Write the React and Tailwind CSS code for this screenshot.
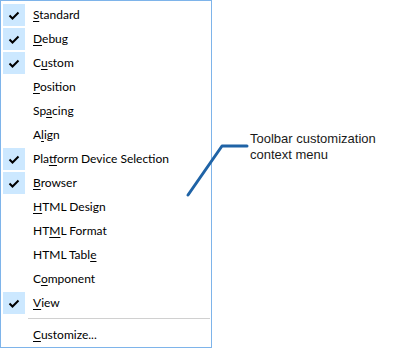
import React from 'react';

const items = [
  { pre: '', key: 'S', post: 'tandard', checked: true },
  { pre: '', key: 'D', post: 'ebug', checked: true },
  { pre: 'C', key: 'u', post: 'stom', checked: true },
  { pre: '', key: 'P', post: 'osition' },
  { pre: 'Sp', key: 'a', post: 'cing' },
  { pre: 'A', key: 'l', post: 'ign' },
  { pre: 'Pla', key: 't', post: 'form Device Selection', checked: true },
  { pre: '', key: 'B', post: 'rowser', checked: true },
  { pre: '', key: 'H', post: 'TML Design' },
  { pre: 'HT', key: 'M', post: 'L Format' },
  { pre: 'HTML Tabl', key: 'e', post: '' },
  { pre: 'C', key: 'o', post: 'mponent' },
  { pre: '', key: 'V', post: 'iew', checked: true },
];

const Check = () => (
  <svg width="22" height="22" viewBox="0 0 22 22">
    <path d="M6.5 11.5 L9.5 14.5 L15.5 8.5" fill="none" stroke="#000" strokeWidth="2" />
  </svg>
);

const MenuRow = ({ item }) => (
  <div className="flex items-center h-6 pl-[2px]">
    <div className={`w-[22px] h-[22px] flex items-center justify-center ${item.checked ? 'bg-[#cce8ff]' : ''}`}>
      {item.checked && <Check />}
    </div>
    <span className="ml-2 text-[12px] text-black whitespace-nowrap">
      {item.pre}
      <span className="underline underline-offset-2">{item.key}</span>
      {item.post}
    </span>
  </div>
);

export default function App() {
  return (
    <div className="relative w-[406px] h-[348px] bg-white flex" style={{ fontFamily: 'Lato, "Noto Sans", sans-serif' }}>
      {/* Context menu */}
      <div className="w-[212px] h-[348px] border border-[#7eb4ea] bg-white flex flex-col pt-[2px]">
        {items.map((item, i) => (
          <MenuRow key={i} item={item} />
        ))}
        <div className="h-px bg-[#d0d0d0] ml-[27px] mr-px my-[3px]" />
        <div className="flex items-center h-6 pl-[2px] mt-px">
          <div className="w-[22px] h-[22px]" />
          <span className="ml-2 text-[12px] text-black">
            <span className="underline underline-offset-2">C</span>ustomize...
          </span>
        </div>
      </div>

      {/* Callout */}
      <div className="pl-[38px] pt-[131px] text-[13px] leading-[16px] text-[#1a1a1a]" style={{ fontFamily: '"Liberation Sans", Arial, sans-serif' }}>
        <div>Toolbar customization</div>
        <div>context menu</div>
      </div>
      <svg className="absolute left-0 top-0 pointer-events-none" width="406" height="348">
        <polyline points="188,195 222,146 247,146" fill="none" stroke="#1f63a6" strokeWidth="3" strokeLinecap="round" strokeLinejoin="round" />
      </svg>
    </div>
  );
}
